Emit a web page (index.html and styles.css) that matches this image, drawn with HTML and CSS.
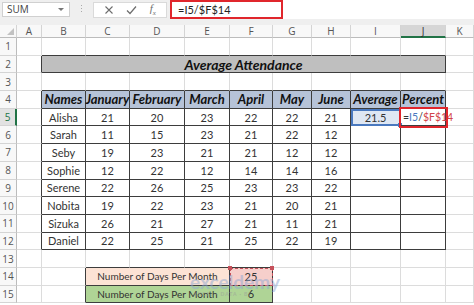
FILE: index.html
```html
<!DOCTYPE html>
<html lang="en">
<head>
    <meta charset="UTF-8" />
    <meta name="viewport" content="width=device-width, initial-scale=1.0" />
    <title>Average Attendance</title>
    <link rel="stylesheet" href="styles.css">
</head>
<body>
    <div class="toolbar">
        <div class="namebox">SUM <span class="caret"></span></div>
        <div class="grip"><i></i><i></i><i></i></div>
        <div class="fxbox">
            <svg width="10" height="10" viewBox="0 0 10 10"><path d="M1.5 1.5 L8.5 8.5 M8.5 1.5 L1.5 8.5" stroke="#6d6d6d" stroke-width="1.1" fill="none"/></svg>
            <svg width="11" height="10" viewBox="0 0 11 10"><path d="M1 5.5 L4 8.5 L10 1.5" stroke="#6d6d6d" stroke-width="1.2" fill="none"/></svg>
            <span class="fx">f<sub>x</sub></span>
        </div>
        <div class="formula"><span class="formula-text">=I5/$F$14</span></div>
    </div>

    <div id="sheet" class="sheet"></div>

    <div class="watermark">exceldemy<span>EXCEL · DATA · BI</span></div>

    <script>
        const cols = ['A', 'B', 'C', 'D', 'E', 'F', 'G', 'H', 'I', 'J', 'K'];
        const heads = ['Names', 'January', 'February', 'March', 'April', 'May', 'June', 'Average', 'Percent'];
        const people = [
            ['Alisha', 21, 20, 23, 22, 22, 21],
            ['Sarah', 11, 15, 23, 21, 22, 12],
            ['Seby', 19, 23, 21, 21, 12, 12],
            ['Sophie', 12, 22, 12, 14, 14, 16],
            ['Serene', 22, 26, 25, 23, 23, 22],
            ['Nobita', 19, 22, 23, 21, 20, 21],
            ['Sizuka', 26, 21, 27, 21, 11, 21],
            ['Daniel', 22, 25, 21, 25, 22, 19]
        ];

        const sheet = document.getElementById('sheet');

        function add(cls, html) {
            const d = document.createElement('div');
            d.className = 'c ' + (cls || '');
            if (html !== undefined) d.innerHTML = html;
            sheet.appendChild(d);
        }

        // Spaltenköpfe
        add('ch corner');
        cols.forEach(c => add('ch' + (c === 'J' ? ' hl' : ''), c));

        for (let r = 1; r <= 15; r++) {
            add('rh' + (r === 5 ? ' hl' : ''), r);

            for (let i = 0; i < cols.length; i++) {
                if (r === 2 && i === 1) {
                    add('title', 'Average Attendance');
                    i = 9;
                    continue;
                }
                if ((r === 14 || r === 15) && i === 2) {
                    add('label ' + (r === 14 ? 'peach' : 'green'), 'Number of Days Per Month');
                    i = 4;
                    continue;
                }
                if ((r === 14 || r === 15) && i === 5) {
                    add(r === 14 ? 'box pink copy' : 'box green', r === 14 ? 25 : 6);
                    continue;
                }
                if (r >= 4 && r <= 12 && i >= 1 && i <= 9) {
                    if (r === 4) {
                        add('th', heads[i - 1]);
                    } else if (i <= 7) {
                        add('td', people[r - 5][i - 1]);
                    } else if (r === 5 && i === 8) {
                        add('td active', '21.5');
                    } else if (r === 5 && i === 9) {
                        add('td editing', '<span class="eq">=</span><span class="ref1">I5</span>/<span class="ref2">$F$14</span>');
                    } else {
                        add('td');
                    }
                    continue;
                }

                let cls = '';
                if ((r === 1 || r === 3) && i >= 1 && i <= 9) cls = 'bb';
                if (r === 13 && i >= 2 && i <= 5) cls = 'bb';
                if ((r === 2 || (r >= 4 && r <= 12)) && i === 0) cls = 'br';
                if ((r === 14 || r === 15) && i === 1) cls = 'br';
                add(cls);
            }
        }
    </script>
</body>
</html>
```

FILE: styles.css
```css
body {
    margin: 0;
    background: #fff;
    font-family: Lato, "Open Sans", sans-serif;
    overflow: hidden;
}

/* Formelleiste */
.toolbar {
    display: flex;
    align-items: flex-start;
    height: 25px;
    background: #efefef;
    box-sizing: border-box;
    padding-left: 2px;
}

.namebox {
    position: relative;
    width: 68px;
    height: 15px;
    margin-top: 2px;
    box-sizing: border-box;
    background: #fff;
    border: 1px solid #d0d0d0;
    font-family: "Open Sans", sans-serif;
    font-size: 10px;
    line-height: 13px;
    color: #444;
    padding-left: 4px;
}

.caret {
    position: absolute;
    right: 5px;
    top: 5px;
    border-left: 3px solid transparent;
    border-right: 3px solid transparent;
    border-top: 3px solid #777;
}

.grip {
    display: flex;
    flex-direction: column;
    gap: 2px;
    width: 23px;
    align-items: center;
    margin-top: 5px;
}

.grip i {
    width: 1px;
    height: 1px;
    background: #aaa;
}

.fxbox {
    display: flex;
    align-items: center;
    justify-content: space-around;
    width: 74px;
    height: 16px;
    margin-top: 2px;
    box-sizing: border-box;
    background: #fff;
    border: 1px solid #dadada;
    padding: 0 4px;
}

.fx {
    font-family: "Liberation Serif", serif;
    font-style: italic;
    font-size: 11px;
    color: #6d6d6d;
}

.fx sub {
    font-size: 7px;
}

.formula {
    flex: 1;
    height: 19px;
    margin-left: 3px;
    background: #fff;
}

.formula-text {
    display: block;
    width: 113px;
    height: 19px;
    box-sizing: border-box;
    border: 2px solid #e0262c;
    font-size: 11px;
    line-height: 15px;
    padding-left: 6px;
    color: #222;
}

/* Tabellenblatt */
.sheet {
    display: grid;
    grid-template-columns: 17px 25px 44px 44px 55px 45px 43px 39px 39px 50px 45px 28px;
    grid-template-rows: 13px repeat(15, 17.7px);
}

.c {
    position: relative;
    box-sizing: border-box;
    border-right: 1px solid #dcdcdc;
    border-bottom: 1px solid #dcdcdc;
    display: flex;
    align-items: center;
    justify-content: center;
    font-size: 11px;
    color: #333;
    white-space: nowrap;
    min-width: 0;
}

.ch, .rh {
    background: #f8f8f8;
    color: #555;
    font-family: "Open Sans", sans-serif;
    font-size: 10px;
    border-right-color: #d4d4d4;
    border-bottom-color: #d4d4d4;
}

.ch {
    border-bottom-color: #bcbcbc;
}

.rh {
    border-right-color: #bcbcbc;
}

.ch.hl {
    background: #d6d6d6;
    border-bottom: 2px solid #217346;
    color: #333;
}

.rh.hl {
    background: #e2e2e2;
    border-right: 2px solid #217346;
    color: #217346;
}

.corner::after {
    content: "";
    position: absolute;
    right: 2px;
    bottom: 2px;
    border-left: 7px solid transparent;
    border-bottom: 7px solid #c2c2c2;
}

.bb {
    border-bottom-color: #3d3d3d;
}

.br {
    border-right-color: #3d3d3d;
}

.title {
    grid-column: span 9;
    background: #bfbfbf;
    border-right-color: #3d3d3d;
    border-bottom-color: #3d3d3d;
    font-size: 14px;
    font-weight: bold;
    font-style: italic;
    color: #111;
}

.th, .td {
    border-right-color: #3d3d3d;
    border-bottom-color: #3d3d3d;
}

.th {
    background: #b6c3d8;
    font-size: 13px;
    font-weight: bold;
    font-style: italic;
    color: #111;
}

.td.active {
    background: #dfe7f3;
    outline: 2px solid #4a79bf;
    outline-offset: -2px;
}

.td.active::after {
    content: "";
    position: absolute;
    right: -2px;
    bottom: -2px;
    width: 4px;
    height: 4px;
    background: #4a79bf;
}

.td.editing {
    justify-content: flex-start;
    padding-left: 2px;
    font-size: 10.5px;
    outline: 2px solid #e0262c;
    outline-offset: 0;
    z-index: 1;
}

.eq {
    color: #333;
}

.ref1 {
    color: #4a79bf;
}

.ref2 {
    color: #d2434a;
}

.label {
    grid-column: span 3;
    font-size: 10px;
    border-right-color: #3d3d3d;
    border-bottom-color: #3d3d3d;
}

.box {
    border-right-color: #3d3d3d;
    border-bottom-color: #3d3d3d;
}

.peach {
    background: #fce3d5;
}

.pink {
    background: #f6cfcb;
}

.green {
    background: #afd496;
}

.copy {
    outline: 1px dashed #c5505a;
    outline-offset: -1px;
}

.copy::before,
.copy::after {
    content: "";
    position: absolute;
    top: -2px;
    width: 4px;
    height: 4px;
    background: #c5505a;
}

.copy::before {
    left: -2px;
}

.copy::after {
    right: -2px;
}

.watermark {
    position: absolute;
    left: 190px;
    top: 272px;
    font-size: 19px;
    font-weight: bold;
    color: #8fa9d3;
    opacity: 0.5;
    line-height: 19px;
}

.watermark span {
    display: block;
    font-size: 5px;
    line-height: 6px;
    letter-spacing: 1px;
    color: #999;
    padding-left: 4px;
}
```
